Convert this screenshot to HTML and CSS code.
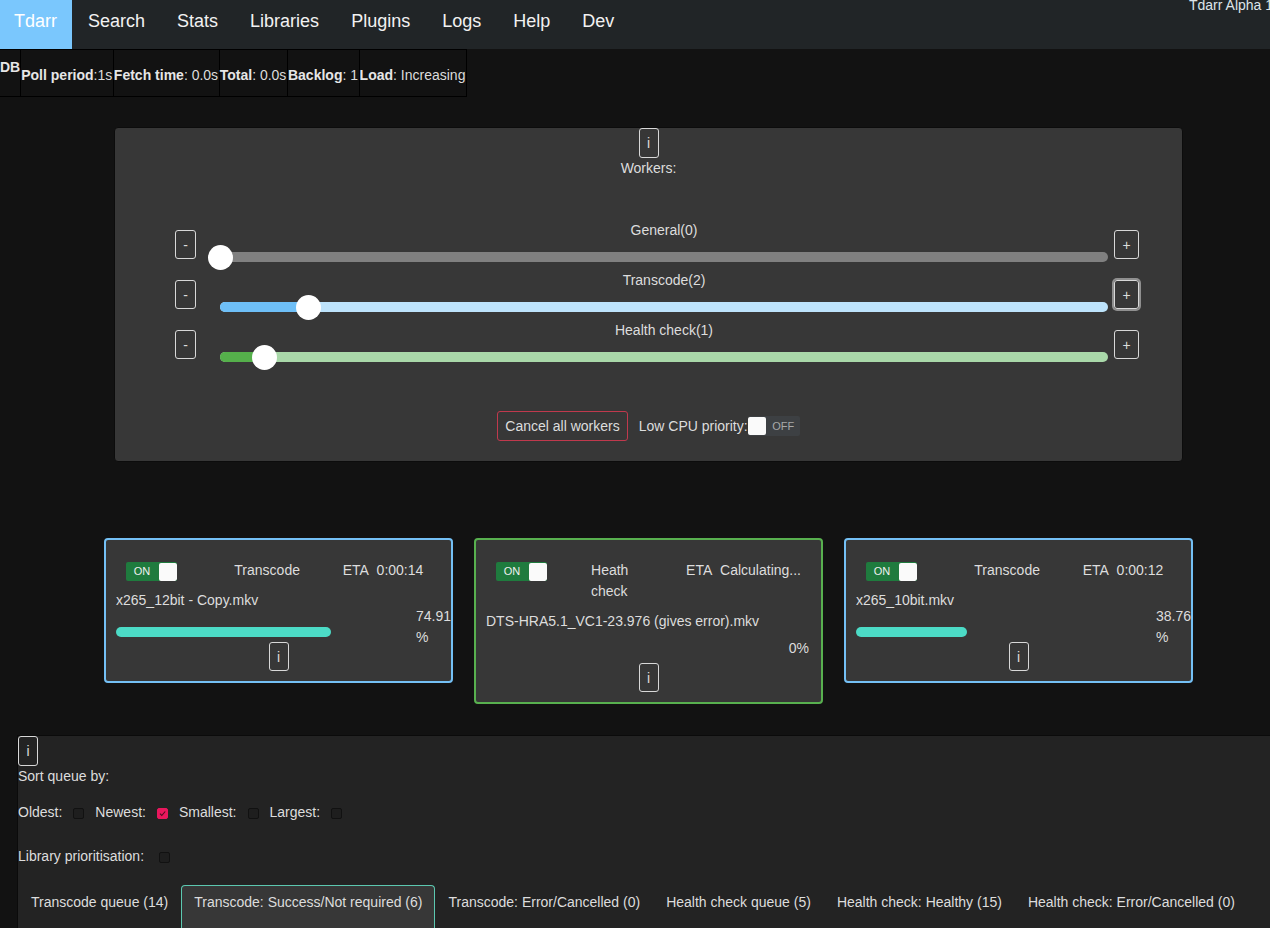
FILE: index.html
```html
<!DOCTYPE html>
<html lang="en">
<head>
<meta charset="utf-8">
<title>Tdarr</title>
<link rel="stylesheet" href="styles.css">
</head>
<body>
<nav class="nav">
  <a class="nav-item active">Tdarr</a>
  <a class="nav-item">Search</a>
  <a class="nav-item">Stats</a>
  <a class="nav-item">Libraries</a>
  <a class="nav-item">Plugins</a>
  <a class="nav-item">Logs</a>
  <a class="nav-item">Help</a>
  <a class="nav-item">Dev</a>
  <span class="version">Tdarr Alpha 1.106</span>
</nav>

<div class="stats">
  <div class="scell db"><b>DB</b></div>
  <div class="scell"><b>Poll period</b>:1s</div>
  <div class="scell"><b>Fetch time</b>: 0.0s</div>
  <div class="scell"><b>Total</b>: 0.0s</div>
  <div class="scell"><b>Backlog</b>: 1</div>
  <div class="scell"><b>Load</b>: Increasing</div>
</div>

<section class="workers">
  <div class="center"><button class="btn btn-i">i</button></div>
  <div class="workers-title">Workers:</div>
  <div class="sliders">
    <div class="srow">
      <button class="btn btn-sm">-</button>
      <div class="scol">
        <div class="slabel">General(0)</div>
        <div class="slider">
          <div class="track t-general"><div class="thumb" style="left:0%"></div></div>
        </div>
      </div>
      <button class="btn btn-sm btn-plus">+</button>
    </div>
    <div class="srow">
      <button class="btn btn-sm">-</button>
      <div class="scol">
        <div class="slabel">Transcode(2)</div>
        <div class="slider">
          <div class="track t-transcode"><div class="fill" style="width:10%"></div><div class="thumb" style="left:10%"></div></div>
        </div>
      </div>
      <button class="btn btn-sm btn-plus focused">+</button>
    </div>
    <div class="srow">
      <button class="btn btn-sm">-</button>
      <div class="scol">
        <div class="slabel">Health check(1)</div>
        <div class="slider">
          <div class="track t-health"><div class="fill" style="width:5%"></div><div class="thumb" style="left:5%"></div></div>
        </div>
      </div>
      <button class="btn btn-sm btn-plus">+</button>
    </div>
  </div>
  <div class="wfoot">
    <button class="btn btn-cancel">Cancel all workers</button>
    <span class="lowcpu">Low CPU priority:</span>
    <span class="toggle off"><span class="knob"></span><span class="tlabel">OFF</span></span>
  </div>
</section>

<div class="cards">
  <div class="card blue">
    <div class="chead">
      <div class="ccol"><span class="toggle on"><span class="tlabel">ON</span><span class="knob"></span></span></div>
      <div class="ccol">Transcode</div>
      <div class="ccol nowrap">ETA&nbsp; 0:00:14</div>
    </div>
    <div class="fname">x265_12bit - Copy.mkv</div>
    <div class="prow">
      <div class="barwrap"><div class="bar" style="width:74.91%"></div></div>
      <div class="pct">74.91 %</div>
    </div>
    <div class="center ibtn"><button class="btn btn-i">i</button></div>
  </div>

  <div class="card green">
    <div class="chead">
      <div class="ccol"><span class="toggle on"><span class="tlabel">ON</span><span class="knob"></span></span></div>
      <div class="ccol">Heath check</div>
      <div class="ccol nowrap">ETA&nbsp; Calculating...</div>
    </div>
    <div class="fname">DTS-HRA5.1_VC1-23.976 (gives error).mkv</div>
    <div class="prow">
      <div class="barwrap"><div class="bar" style="width:0%"></div></div>
      <div class="pct pct-right">0%</div>
    </div>
    <div class="center ibtn"><button class="btn btn-i">i</button></div>
  </div>

  <div class="card blue">
    <div class="chead">
      <div class="ccol"><span class="toggle on"><span class="tlabel">ON</span><span class="knob"></span></span></div>
      <div class="ccol">Transcode</div>
      <div class="ccol nowrap">ETA&nbsp; 0:00:12</div>
    </div>
    <div class="fname">x265_10bit.mkv</div>
    <div class="prow">
      <div class="barwrap"><div class="bar" style="width:38.76%"></div></div>
      <div class="pct">38.76 %</div>
    </div>
    <div class="center ibtn"><button class="btn btn-i">i</button></div>
  </div>
</div>

<section class="queue">
  <div class="qhead"><button class="btn btn-i">i</button></div>
  <div class="qline">Sort queue by:</div>
  <div class="qline sortrow">
    <span>Oldest:</span><span class="cb"></span>
    <span>Newest:</span><span class="cb checked"><svg width="9" height="9" viewBox="0 0 10 10"><path d="M2.2 5.2 L4.2 7.2 L8 2.8" fill="none" stroke="#4a0c1e" stroke-width="1.2"/></svg></span>
    <span>Smallest:</span><span class="cb"></span>
    <span>Largest:</span><span class="cb"></span>
  </div>
  <div class="qline librow">
    <span>Library prioritisation:</span><span class="cb cb-lib"></span>
  </div>
  <div class="tabs">
    <div class="tab">Transcode queue (14)</div>
    <div class="tab active">Transcode: Success/Not required (6)</div>
    <div class="tab">Transcode: Error/Cancelled (0)</div>
    <div class="tab">Health check queue (5)</div>
    <div class="tab">Health check: Healthy (15)</div>
    <div class="tab">Health check: Error/Cancelled (0)</div>
  </div>
</section>
</body>
</html>
```

FILE: styles.css
```css
html, body {
  margin: 0;
  padding: 0;
  height: 100%;
  overflow: hidden;
}

body {
  background: #121212;
  color: #dddddd;
  font-family: "Liberation Sans", Arial, sans-serif;
  font-size: 14px;
  line-height: 21px;
}

button {
  font-family: inherit;
}

/* ---------- top nav ---------- */
.nav {
  position: relative;
  display: flex;
  height: 49px;
  background: #212527;
}

.nav-item {
  padding: 11px 16px 0;
  font-size: 18px;
  line-height: 20px;
  color: #f2f2f2;
}

.nav-item.active {
  background: #7ac7fd;
  color: #ffffff;
  padding-left: 14px;
  padding-right: 15px;
}

.version {
  position: absolute;
  left: 1189px;
  top: -3px;
  font-size: 14px;
  line-height: 16px;
  white-space: nowrap;
  color: #dde4ea;
}

/* ---------- stats strip ---------- */
.stats {
  display: inline-flex;
  height: 48px;
  box-sizing: border-box;
  border-top: 1px solid #000;
  border-bottom: 1px solid #000;
  vertical-align: top;
}

.scell {
  display: flex;
  align-items: center;
  padding: 4px 0.6px 0 0;
  border-right: 1px solid #000;
  white-space: nowrap;
  line-height: 16px;
  color: #dcdcdc;
}

.scell b {
  color: #e6e6e6;
}

.scell.db {
  align-items: flex-start;
  padding: 9px 0 0 0;
}

/* ---------- generic buttons ---------- */
.btn {
  box-sizing: border-box;
  background: transparent;
  color: #dddddd;
  border: 1px solid #d8d8d8;
  border-radius: 3px;
  font-size: 14px;
  line-height: 16px;
  padding: 0 7px;
  margin: 0;
  height: 29px;
}

.btn-i {
  width: 20px;
  height: 30px;
  padding: 0;
}

.btn-sm {
  flex: none;
  min-width: 21px;
  padding: 0 6px;
  margin-top: 10px;
}

.btn-plus {
  min-width: 25px;
}

.btn-plus.focused {
  box-shadow: 0 0 0 2px #8f8f8f;
}

.center {
  display: flex;
  justify-content: center;
}

/* ---------- workers panel ---------- */
.workers {
  box-sizing: border-box;
  width: 1069px;
  margin: 30px 0 0 114px;
  background: #373737;
  border: 1px solid #0c0c0c;
  border-radius: 4px;
  padding: 0 0 20px;
}

.workers-title {
  text-align: center;
}

.sliders {
  margin-top: 41px;
}

.srow {
  display: flex;
  align-items: flex-start;
  height: 50px;
  padding: 0 43px 0 60px;
}

.scol {
  flex: 1;
  margin: 0 6px 0 24px;
}

.slabel {
  text-align: center;
}

.slider {
  height: 29px;
  padding-top: 11px;
  box-sizing: border-box;
}

.track {
  position: relative;
  height: 10px;
  border-radius: 5px;
}

.fill {
  height: 10px;
  border-radius: 5px 0 0 5px;
}

.thumb {
  position: absolute;
  top: -7.5px;
  width: 25px;
  height: 25px;
  margin-left: -12.5px;
  border-radius: 50%;
  background: #ffffff;
}

.t-general { background: #808080; }
.t-transcode { background: #bde3fb; }
.t-transcode .fill { background: #6ebff7; }
.t-health { background: #a9d8a9; }
.t-health .fill { background: #55b04b; }

.wfoot {
  display: flex;
  justify-content: center;
  align-items: center;
  margin-top: 41px;
}

.btn-cancel {
  height: 30px;
  padding: 0 7px;
  border-color: #c0394d;
}

.lowcpu {
  margin-left: 11px;
}

/* ---------- toggles ---------- */
.toggle {
  display: inline-flex;
  align-items: center;
  width: 51px;
  height: 19px;
  border-radius: 2px;
  overflow: hidden;
  font-size: 11px;
  line-height: 19px;
}

.toggle .tlabel {
  flex: 1;
  text-align: center;
}

.toggle .knob {
  width: 18px;
  height: 18px;
  background: #fafafa;
  border-radius: 2px;
  margin: 0 0.5px;
}

.toggle.on {
  background: #1f7b3e;
  color: #f0f0f0;
}

.toggle.off {
  background: #3d4043;
  color: #a8a8a8;
  width: 52px;
  height: 20px;
}

/* ---------- worker cards ---------- */
.cards {
  display: flex;
  align-items: flex-start;
  gap: 21px;
  margin: 76px 0 0 104px;
}

.card {
  box-sizing: border-box;
  width: 349px;
  background: #373737;
  border: 2px solid #74c0f5;
  border-radius: 4px;
  padding: 20px 10px 10px;
}

.card.green {
  border-color: #58b04f;
}

.chead {
  display: flex;
  align-items: flex-start;
}

.ccol {
  flex: 1 1 0;
  padding: 0 10px;
}

.nowrap {
  white-space: nowrap;
}

.fname {
  margin-top: 9px;
  white-space: nowrap;
}

.prow {
  display: flex;
  align-items: center;
  height: 32px;
}

.barwrap {
  flex: 1;
  padding-top: 10px;
}

.bar {
  height: 10px;
  border-radius: 5px;
  background: #4cdbc6;
}

.pct {
  flex: none;
  width: 25px;
  margin-left: 13px;
}

.pct-right {
  text-align: right;
  box-sizing: border-box;
  padding-right: 2px;
}

.ibtn {
  margin-top: -1px;
}

.ibtn .btn-i {
  height: 29px;
}

/* ---------- queue section ---------- */
.queue {
  margin: 31px 0 0 17px;
  background: #232323;
  border-top: 1px solid #0b0b0b;
  border-left: 1px solid #0b0b0b;
  height: 400px;
}

.qhead {
  display: flex;
}

.sortrow,
.librow {
  display: flex;
  align-items: center;
}

.sortrow {
  margin-top: 15px;
}

.librow {
  margin-top: 23px;
}

.cb {
  flex: none;
  box-sizing: border-box;
  width: 11px;
  height: 11px;
  margin: 2px 11px 0;
  border: 1px solid #111111;
  background: #1e1e1e;
  border-radius: 2px;
}

.cb svg {
  display: block;
}

.cb.checked {
  background: #e8175d;
  border-color: #e8175d;
}

.cb-lib {
  margin-left: 15px;
}

.tabs {
  display: flex;
  margin-top: 18px;
}

.tab {
  padding: 6px 12px 30px;
  border: 1px solid transparent;
  border-bottom: none;
  border-radius: 4px 4px 0 0;
  white-space: nowrap;
}

.tab.active {
  background: #373737;
  border-color: #5cc8b0;
}
```
